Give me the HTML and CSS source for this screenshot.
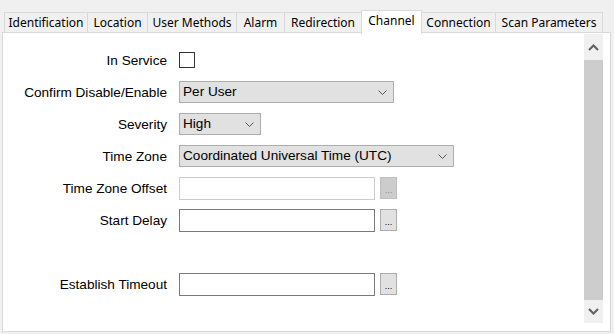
FILE: index.html
```html
<!DOCTYPE html>
<html lang="en">
<head>
  <meta charset="UTF-8" />
  <title>Channel</title>
  <link rel="stylesheet" href="styles.css">
</head>
<body>
  <div class="tabs">
    <div class="tab t-ident">Identification</div>
    <div class="tab t-loc">Location</div>
    <div class="tab t-user">User Methods</div>
    <div class="tab t-alarm">Alarm</div>
    <div class="tab t-redir">Redirection</div>
    <div class="tab active t-chan">Channel</div>
    <div class="tab t-conn">Connection</div>
    <div class="tab t-scan">Scan Parameters</div>
  </div>

  <div class="panel">
    <div class="form">
      <label>In Service</label>
      <div><input type="checkbox" class="check"></div>

      <label>Confirm Disable/Enable</label>
      <div class="combo w-mid">Per User
        <svg class="arrow" width="9" height="5" viewBox="0 0 9 5"><polyline points="0.5,0.5 4.5,4.5 8.5,0.5" fill="none" stroke="#555" stroke-width="1"/></svg>
      </div>

      <label>Severity</label>
      <div class="combo w-small">High
        <svg class="arrow" width="9" height="5" viewBox="0 0 9 5"><polyline points="0.5,0.5 4.5,4.5 8.5,0.5" fill="none" stroke="#555" stroke-width="1"/></svg>
      </div>

      <label>Time Zone</label>
      <div class="combo w-wide">Coordinated Universal Time (UTC)
        <svg class="arrow" width="9" height="5" viewBox="0 0 9 5"><polyline points="0.5,0.5 4.5,4.5 8.5,0.5" fill="none" stroke="#555" stroke-width="1"/></svg>
      </div>

      <label>Time Zone Offset</label>
      <div class="field">
        <input type="text" class="text" disabled>
        <button class="dots" disabled>...</button>
      </div>

      <label>Start Delay</label>
      <div class="field">
        <input type="text" class="text">
        <button class="dots">...</button>
      </div>

      <label></label>
      <div></div>

      <label>Establish Timeout</label>
      <div class="field">
        <input type="text" class="text">
        <button class="dots">...</button>
      </div>
    </div>

    <div class="scrollbar">
      <div class="sb-btn">
        <svg width="11" height="7" viewBox="0 0 11 7"><polyline points="1,6 5.5,1.5 10,6" fill="none" stroke="#606060" stroke-width="2"/></svg>
      </div>
      <div class="thumb"></div>
      <div class="sb-btn">
        <svg width="11" height="7" viewBox="0 0 11 7"><polyline points="1,1 5.5,5.5 10,1" fill="none" stroke="#606060" stroke-width="2"/></svg>
      </div>
    </div>
  </div>
</body>
</html>
```

FILE: styles.css
```css
* {
  box-sizing: border-box;
  margin: 0;
  padding: 0;
}

body {
  width: 614px;
  height: 334px;
  background: #f0f0f0;
  font-family: "Liberation Sans", Arial, sans-serif;
  font-size: 13.6px;
  color: #000;
  overflow: hidden;
}

/* tab strip */
.tabs {
  display: flex;
  align-items: flex-end;
  height: 33px;
  padding-left: 4px;
  position: relative;
  z-index: 1;
}

.tab {
  height: 21px;
  border: 1px solid #d9d9d9;
  border-left: none;
  background: #f0f0f0;
  font-family: "Noto Sans", sans-serif;
  font-size: 12px;
  line-height: 19px;
  text-align: center;
  white-space: nowrap;
}

.tab:first-child {
  border-left: 1px solid #d9d9d9;
}

.tab.active {
  height: 24px;
  background: #fff;
  border-left: 1px solid #d9d9d9;
  border-bottom: none;
  line-height: 20px;
  margin-bottom: -1px;
  margin-left: -1px;
  position: relative;
}

.t-ident { width: 84px; }
.t-loc { width: 60px; }
.t-user { width: 89px; }
.t-alarm { width: 48px; }
.t-redir { width: 77px; }
.t-chan { width: 61px; }
.t-conn { width: 74px; }
.t-scan { width: 107px; }

/* panel */
.panel {
  margin-left: 2px;
  margin-top: -1px;
  width: 609px;
  height: 300px;
  background: #fff;
  border: 1px solid #d9d9d9;
  display: flex;
}

.form {
  flex: 1;
  display: grid;
  grid-template-columns: 164px auto;
  grid-auto-rows: 32px;
  column-gap: 12px;
  align-items: center;
  align-content: start;
  padding-top: 11px;
}

.form label {
  text-align: right;
  white-space: nowrap;
}

.check {
  appearance: none;
  display: block;
  width: 16px;
  height: 16px;
  border: 1px solid #333;
  background: #fff;
}

.combo {
  position: relative;
  height: 22px;
  line-height: 20px;
  padding-left: 3px;
  background: #e1e1e1;
  border: 1px solid #adadad;
}

.arrow {
  position: absolute;
  right: 6px;
  top: 8px;
}

.w-mid { width: 215px; }
.w-small { width: 82px; }
.w-wide { width: 275px; }

.field {
  display: flex;
  align-items: center;
  gap: 5px;
}

.text {
  width: 196px;
  height: 23px;
  border: 1px solid #7a7a7a;
  background: #fff;
  outline: none;
}

.text:disabled {
  border-color: #cccccc;
  background: #fff;
}

.dots {
  width: 17px;
  height: 22px;
  border: 1px solid #adadad;
  background: #e1e1e1;
  font-family: "Liberation Sans", Arial, sans-serif;
  font-size: 9px;
  line-height: 24px;
  color: #000;
  text-align: center;
}

.dots:disabled {
  background: #cccccc;
  border-color: #bfbfbf;
  color: #8a8a8a;
}

/* scrollbar */
.scrollbar {
  width: 19px;
  margin: 1px 7px 8px 0;
  background: #f0f0f0;
  display: flex;
  flex-direction: column;
}

.sb-btn {
  height: 26px;
  display: flex;
  align-items: center;
  justify-content: center;
}

.sb-btn:last-child {
  height: 23px;
}

.thumb {
  flex: 1;
  background: #cdcdcd;
}
```
